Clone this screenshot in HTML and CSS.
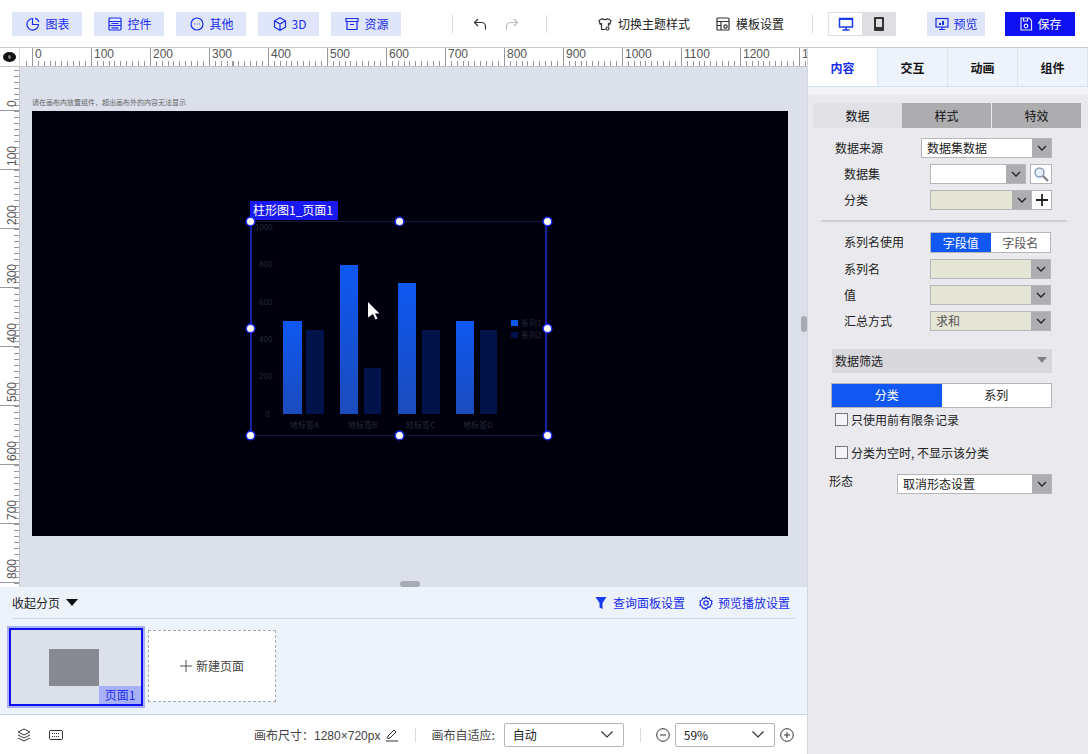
FILE: index.html
```html
<!DOCTYPE html>
<html lang="zh">
<head>
<meta charset="utf-8">
<title>大屏编辑器</title>
<link rel="stylesheet" href="styles.css">
</head>
<body>
<div class="app">
  <header class="topbar">
    <div class="tool-group">
      <button class="tool"><svg class="ic" viewBox="0 0 14 14"><path d="M6.500 1.500A5.800 5.800 0 1 0 12.500 7.500H6.500z"/><path d="M9 1.300a4.500 4.500 0 0 1 3.700 3.700"/></svg>图表</button>
      <button class="tool"><svg class="ic" viewBox="0 0 14 14"><rect x="1" y="1" width="12" height="12" rx="1"/><path d="M1 4.500h12M1 8.500h12M3.500 6.500h7M3.500 10.800h7"/></svg>控件</button>
      <button class="tool"><svg class="ic" viewBox="0 0 14 14"><circle cx="7" cy="7" r="6"/><path d="M4 7h.8M6.600 7h.8M9.200 7h.8"/></svg>其他</button>
      <button class="tool tool-3d"><svg class="ic" viewBox="0 0 14 14"><path d="M7 .8l5.500 3v6.400L7 13.200l-5.500-3V3.800zM1.500 3.800L7 7l5.500-3.200M7 7v6.200"/></svg>3D</button>
      <button class="tool"><svg class="ic" viewBox="0 0 14 14"><path d="M1 1.500h12v3H1zM2 4.500v8h10v-8M5 7.500h4"/></svg>资源</button>
    </div>
    <span class="vline vline-a"></span>
    <svg class="hist" viewBox="0 0 14 14"><path d="M5 2L1.500 5.500 5 9M1.500 5.500h7a4 4 0 0 1 4 4v3"/></svg>
    <svg class="hist hist-off" viewBox="0 0 14 14"><path d="M9 2l3.500 3.500L9 9M12.500 5.500h-7a4 4 0 0 0-4 4v3"/></svg>
    <span class="vline vline-b"></span>
    <span class="link link-theme"><svg class="ic-dark" viewBox="0 0 14 14"><path d="M4.500 1.500L1 3.500l1 3.500 1.500-.5v6h4M9.500 1.500L13 3.500l-1 3.500-1.500-.5v3M4.500 1.500c.5 1.500 4.500 1.500 5 0"/><circle cx="9.500" cy="11.500" r="1.500"/></svg>切换主题样式</span>
    <span class="link link-tpl"><svg class="ic-dark" viewBox="0 0 14 14"><rect x="1" y="1" width="12" height="12" rx="1"/><path d="M1 4.500h12M5 4.500V13M1 8.500h4"/><circle cx="9.500" cy="9.500" r="1.700"/></svg>模板设置</span>
    <span class="vline vline-c"></span>
    <div class="device">
      <span class="device-cell device-on"><svg class="ic-device" viewBox="0 0 16 16"><rect x="1.500" y="2.500" width="13" height="8.500" fill="none" stroke="#1a3cf0" stroke-width="1.500"/><path d="M1.500 3h13" stroke="#1a3cf0" stroke-width="2"/><path d="M4.500 14h7M8 11v3" stroke="#1a3cf0" fill="none" stroke-width="1.500"/></svg></span>
      <span class="device-cell"><svg class="ic-device" viewBox="0 0 16 16"><rect x="3" y="1" width="10" height="14" rx="1" fill="#333"/><rect x="5" y="3" width="6" height="8" fill="#ddd"/></svg></span>
    </div>
    <button class="action action-ghost"><svg class="ic" viewBox="0 0 14 14"><rect x="1" y="1.500" width="12" height="8.500"/><path d="M4 12.500h6M7 10v2.500"/><path class="ic-fill" d="M4 8V6h2v2zM7 8V4h2v4z"/></svg>预览</button>
    <button class="action action-solid"><svg class="ic ic-white" viewBox="0 0 14 14"><path d="M2 1h8l2.500 2.500V13H2z"/><circle cx="7" cy="9" r="1.800"/><path d="M4.500 1v3h4V1"/></svg>保存</button>
  </header>

  <div class="workspace">
    <main class="editor">
      <div class="ruler-top">
        <span class="ruler-corner"><span class="eye"></span></span>
        <div class="ruler-x">
          <span class="rx">0</span><span class="rx">100</span><span class="rx">200</span><span class="rx">300</span><span class="rx">400</span><span class="rx">500</span><span class="rx">600</span><span class="rx">700</span><span class="rx">800</span><span class="rx">900</span><span class="rx">1000</span><span class="rx">1100</span><span class="rx">1200</span><span class="rx">1300</span>
        </div>
      </div>
      <div class="stage-row">
        <div class="ruler-y">
          <span class="ry">0</span><span class="ry">100</span><span class="ry">200</span><span class="ry">300</span><span class="ry">400</span><span class="ry">500</span><span class="ry">600</span><span class="ry">700</span><span class="ry">800</span>
        </div>
        <div class="stage">
          <p class="hint">请在画布内放置组件，超出画布外的内容无法显示</p>
          <div class="canvas">
            <div class="widget">
              <span class="widget-tag">柱形图1_页面1</span>
              <svg class="chart" viewBox="0 0 297 215">
                <defs>
                  <linearGradient id="barA" x1="0" y1="0" x2="0" y2="1"><stop offset="0" stop-color="#0e58f2"/><stop offset="1" stop-color="#1b4cbc"/></linearGradient>
                </defs>
                <g class="axis">
                  <text x="5" y="9">1000</text><text x="9" y="46">800</text><text x="9" y="84">600</text><text x="9" y="121">400</text><text x="9" y="158">200</text><text x="15" y="196">0</text>
                  <text x="40" y="207">地标签A</text><text x="98" y="207">地标签B</text><text x="156" y="207">较标签C</text><text x="213" y="207">地标签D</text>
                  <text x="271" y="105">系列1</text><text x="271" y="117">系列2</text>
                </g>
                <rect x="33" y="100" width="19" height="93" fill="url(#barA)"/><rect x="56" y="109" width="18" height="84" fill="#02134a"/>
                <rect x="90" y="44" width="18" height="149" fill="url(#barA)"/><rect x="114" y="147" width="17" height="46" fill="#02134a"/>
                <rect x="148" y="62" width="18" height="131" fill="url(#barA)"/><rect x="172" y="109" width="18" height="84" fill="#02134a"/>
                <rect x="206" y="100" width="18" height="93" fill="url(#barA)"/><rect x="230" y="109" width="17" height="84" fill="#02134a"/>
                <rect x="261" y="99" width="7" height="6" fill="#0e58f2"/><rect x="261" y="111" width="7" height="6" fill="#02134a"/>
              </svg>
              <i class="handle h-tl"></i><i class="handle h-tc"></i><i class="handle h-tr"></i><i class="handle h-ml"></i><i class="handle h-mr"></i><i class="handle h-bl"></i><i class="handle h-bc"></i><i class="handle h-br"></i>
              <svg class="cursor" viewBox="0 0 12 18"><path d="M0 0l11.500 11.500H7l2.500 5-2 1-2.500-5.500L0 15.500z"/></svg>
            </div>
          </div>
        </div>
        <span class="grip grip-v"></span>
        <span class="grip grip-h"></span>
      </div>

      <section class="pages">
        <div class="pages-head">
          <span class="collapse">收起分页<i class="caret"></i></span>
          <span class="pages-links">
            <span class="page-link"><svg class="ic-sm" viewBox="0 0 14 14"><path d="M1.500 1h11L8.500 7v6l-3-1.500V7z" fill="#1a3cf0"/></svg>查询面板设置</span>
            <span class="page-link"><svg class="ic-sm ic-line" viewBox="0 0 14 14"><path d="M7 .8l1.200 1.700 2-.4.700 2 2 .7-.4 2 .4 1-1.200 1.400-.8 2-2-.2L7 13.200l-1.400-1.200-2 .2-.7-2-1.900-1 .5-2-.5-2 1.900-1 .7-2 2 .4z"/><circle cx="7" cy="7" r="2.200"/></svg>预览播放设置</span>
          </span>
        </div>
        <div class="pages-list">
          <div class="thumb">
            <div class="thumb-art"></div>
            <span class="thumb-name">页面1</span>
          </div>
          <div class="new-page"><svg class="plus-thin" viewBox="0 0 12 12"><path d="M6 0v12M0 6h12"/></svg>新建页面</div>
        </div>
      </section>

      <footer class="statusbar">
        <svg class="st-ic st-layers" viewBox="0 0 14 14"><path d="M7 1l6 3-6 3-6-3zM1 7l6 3 6-3M1 10l6 3 6-3"/></svg>
        <svg class="st-ic st-keys" viewBox="0 0 14 14"><rect x="0.500" y="2.500" width="13" height="9" rx="1"/><path d="M3 5.500h8M3 8.500h8" stroke-dasharray="1 1"/></svg>
        <span class="size-label">画布尺寸：1280×720px</span>
        <svg class="st-ic st-pen" viewBox="0 0 14 14"><path d="M1 13h12M2.500 10.500l.5-2.500 6-6 2 2-6 6z"/></svg>
        <span class="vline vline-d"></span>
        <span class="fit-label">画布自适应:</span>
        <span class="combo combo-fit">自动<svg class="chev-lg" viewBox="0 0 12 7"><path d="M.5 .5L6 6l5.500-5.500"/></svg></span>
        <span class="vline vline-e"></span>
        <svg class="st-ic st-minus" viewBox="0 0 14 14"><circle cx="7" cy="7" r="6.300"/><path d="M4 7h6"/></svg>
        <span class="combo combo-zoom">59%<svg class="chev-lg" viewBox="0 0 12 7"><path d="M.5 .5L6 6l5.500-5.500"/></svg></span>
        <svg class="st-ic st-plus" viewBox="0 0 14 14"><circle cx="7" cy="7" r="6.300"/><path d="M4 7h6M7 4v6"/></svg>
      </footer>
    </main>

    <aside class="panel">
      <nav class="tabs">
        <span class="tab tab-on">内容</span><span class="tab">交互</span><span class="tab">动画</span><span class="tab">组件</span>
      </nav>
      <div class="panel-body">
        <div class="subtabs">
          <span class="subtab subtab-on">数据</span><span class="subtab">样式</span><span class="subtab">特效</span>
        </div>
        <div class="row row-first row-top"><label class="lab">数据来源</label>
          <span class="sel sel-source"><span class="val val-white">数据集数据</span><span class="arr"><svg viewBox="0 0 10 6"><path d="M1 1l4 4 4-4"/></svg></span></span>
        </div>
        <div class="row"><label class="lab">数据集</label>
          <span class="sel sel-set"><span class="val val-white"></span><span class="arr"><svg viewBox="0 0 10 6"><path d="M1 1l4 4 4-4"/></svg></span></span>
          <span class="mini mini-search"><svg viewBox="0 0 16 16"><circle cx="6.500" cy="6.500" r="4.500" fill="#e6eef7" stroke="#8aa0b8" stroke-width="1.500"/><path d="M10 10l5 5" stroke="#7a7a80" stroke-width="2"/></svg></span>
        </div>
        <div class="row"><label class="lab">分类</label>
          <span class="sel sel-cat"><span class="val"></span><span class="arr"><svg viewBox="0 0 10 6"><path d="M1 1l4 4 4-4"/></svg></span></span>
          <span class="mini mini-plus"><svg viewBox="0 0 12 12"><path d="M6 0v12M0 6h12"/></svg></span>
        </div>
        <hr class="sep">
        <div class="row row-seg"><label class="lab">系列名使用</label>
          <span class="seg"><span class="seg-item seg-on">字段值</span><span class="seg-item">字段名</span></span>
        </div>
        <div class="row"><label class="lab">系列名</label>
          <span class="sel sel-wide"><span class="val"></span><span class="arr"><svg viewBox="0 0 10 6"><path d="M1 1l4 4 4-4"/></svg></span></span>
        </div>
        <div class="row"><label class="lab">值</label>
          <span class="sel sel-wide"><span class="val"></span><span class="arr"><svg viewBox="0 0 10 6"><path d="M1 1l4 4 4-4"/></svg></span></span>
        </div>
        <div class="row"><label class="lab">汇总方式</label>
          <span class="sel sel-wide"><span class="val val-muted">求和</span><span class="arr"><svg viewBox="0 0 10 6"><path d="M1 1l4 4 4-4"/></svg></span></span>
        </div>
        <div class="filter-head">数据筛选<i class="caret caret-grey"></i></div>
        <div class="switch"><span class="switch-item switch-on">分类</span><span class="switch-item">系列</span></div>
        <div class="check check-a"><i class="box"></i>只使用前有限条记录</div>
        <div class="check check-b"><i class="box"></i>分类为空时, 不显示该分类</div>
        <div class="row row-form"><label class="lab">形态</label>
          <span class="sel sel-form"><span class="val val-white">取消形态设置</span><span class="arr"><svg viewBox="0 0 10 6"><path d="M1 1l4 4 4-4"/></svg></span></span>
        </div>
      </div>
    </aside>
  </div>
</div>
</body>
</html>
```

FILE: styles.css
```css
* { box-sizing: border-box; }
html, body { margin: 0; padding: 0; }
body { font-family: "Noto Sans CJK SC", "Liberation Sans", sans-serif; font-size: 12px; color: #222; background: #fff; }
button { font: inherit; border: 0; padding: 0; }
.app { width: 1088px; height: 754px; display: flex; flex-direction: column; overflow: hidden; }

/* top bar */
.topbar { height: 48px; flex: none; display: flex; align-items: center; padding: 0 0 0 12px; border-bottom: 1px solid #c9c9d0; background: #fff; }
.tool-group { display: flex; gap: 12px; }
.tool { width: 70px; height: 24px; padding-left: 2px; background: #dfe6fa; color: #1a2cf0; display: flex; align-items: center; justify-content: center; gap: 5px; }
.tool-3d { width: 61px; }
.ic { width: 14px; height: 14px; fill: none; stroke: #1a2cf0; stroke-width: 1.200; flex: none; }
.ic-fill { fill: #1a2cf0; stroke: none; }
.ic-white { stroke: #dfe6fa; }
.ic-dark { width: 14px; height: 14px; fill: none; stroke: #333; stroke-width: 1.200; flex: none; }
.vline { width: 1px; height: 18px; background: #dcdce0; flex: none; }
.vline-a { margin-left: 51px; }
.hist { width: 14px; height: 14px; fill: none; stroke: #333; stroke-width: 1.200; flex: none; margin-left: 20px; }
.hist-off { stroke: #bbb; margin-left: 18px; }
.vline-b { margin-left: 27px; }
.link { display: flex; align-items: center; gap: 6px; color: #222; flex: none; }
.link-theme { margin-left: 51px; }
.link-tpl { margin-left: 26px; }
.vline-c { margin-left: 28px; }
.device { margin-left: 15px; width: 68px; height: 24px; background: #dedee3; display: flex; padding: 1px; }
.device-cell { width: 33px; display: flex; align-items: center; justify-content: center; }
.device-on { background: #fff; }
.ic-device { width: 16px; height: 16px; }
.action { height: 24px; display: flex; align-items: center; justify-content: center; gap: 5px; flex: none; }
.action-ghost { width: 58px; margin-left: 31px; background: #dfe6fa; color: #1a2cf0; }
.action-solid { width: 70px; margin-left: 20px; background: #1010f5; color: #fff; }

.workspace { flex: 1; display: flex; min-height: 0; }
.editor { width: 808px; flex: none; display: flex; flex-direction: column; border-right: 1px solid #d5d5da; }

/* rulers */
.ruler-top { height: 19px; flex: none; display: flex; background: #fff; }
.ruler-corner { width: 20px; flex: none; display: flex; align-items: center; justify-content: center; border-right: 1px solid #ddd; border-bottom: 1px solid #c4c4ca; }
.eye { width: 13px; height: 10px; border-radius: 50%; background: radial-gradient(circle, #777 0 1.500px, #111 2px); }
.ruler-x { flex: 1; min-width: 0; overflow: hidden; display: flex; padding-left: 12px; border-bottom: 1px solid #c4c4ca;
  background: repeating-linear-gradient(90deg, #999 0 1px, transparent 1px 5.900px) 6px 13px / 100% 6px no-repeat; }
.rx { width: 59px; flex: none; height: 18px; border-left: 1px solid #999; padding-left: 2px; font: 12px/13px "Liberation Sans", sans-serif; color: #555; }
.stage-row { flex: 1; min-height: 0; display: flex; position: relative; }
.ruler-y { width: 20px; flex: none; overflow: hidden; border-right: 1px solid #c4c4ca; display: flex; flex-direction: column;
  background: #fff repeating-linear-gradient(180deg, #999 0 1px, transparent 1px 5.900px) 14px 3px / 6px 100% no-repeat; }
.ry { height: 59px; flex: none; border-top: 1px solid #999; writing-mode: vertical-rl; transform: rotate(180deg); font: 12px/13px "Liberation Sans", sans-serif; color: #555; padding-top: 3px; padding-right: 6px; }
.ry:first-child { margin-top: -15px; }

/* stage */
.stage { flex: 1; min-width: 0; background: #dce0eb; padding: 28px 0 0 12px; }
.hint { margin: 0 0 2px; height: 14px; font-size: 7px; line-height: 14px; color: #666; }
.canvas { width: 756px; height: 425px; background: #00000c; position: relative; }
.widget { position: absolute; left: 218px; top: 110px; width: 297px; height: 215px; border: 1px solid #15193f; border-left: 2px solid #1522a8; border-right: 2px solid #1522a8; }
.widget-tag { position: absolute; left: -2px; top: -21px; width: 88px; height: 19px; background: #1a1af0; color: #fff; font-size: 12px; line-height: 18px; padding-left: 3px; white-space: nowrap; }
.chart { position: absolute; left: -2px; top: -1px; width: 297px; height: 215px; }
.axis text { font-size: 8px; fill: #272b3c; font-family: "Noto Sans CJK SC", "Liberation Sans", sans-serif; }
.handle { position: absolute; width: 7px; height: 7px; border-radius: 50%; background: #fff; box-shadow: 0 0 0 1.500px #1a2cf0; }
.h-tl { left: -5px; top: -4px; } .h-tc { left: 144px; top: -4px; } .h-tr { right: -6px; top: -4px; }
.h-ml { left: -5px; top: 103px; } .h-mr { right: -6px; top: 103px; }
.h-bl { left: -5px; bottom: -4px; } .h-bc { left: 144px; bottom: -4px; } .h-br { right: -6px; bottom: -4px; }
.cursor { position: absolute; left: 116px; top: 80px; width: 12px; height: 18px; fill: #fff; }
.grip { position: absolute; background: #a9abb2; border-radius: 3px; }
.grip-v { right: 0; top: 249px; width: 6px; height: 16px; }
.grip-h { left: 400px; bottom: 0; width: 20px; height: 6px; }

/* pages */
.pages { height: 128px; flex: none; background: #edf3fb; padding: 0 12px 0 8px; border-bottom: 1px solid #cfd2d8; }
.pages-head { height: 32px; margin-left: 4px; display: flex; align-items: center; justify-content: space-between; border-bottom: 1px solid #d4d8e0; padding-right: 5px; }
.collapse { display: flex; align-items: center; color: #222; }
.caret { display: block; width: 0; height: 0; border-left: 6px solid transparent; border-right: 6px solid transparent; border-top: 7px solid #111; margin-left: 6px; }
.caret-grey { border-top-color: #808088; border-left-width: 5px; border-right-width: 5px; border-top-width: 6px; }
.pages-links { display: flex; gap: 14px; color: #1a2cf0; }
.page-link { display: flex; align-items: center; gap: 5px; }
.ic-sm { width: 14px; height: 14px; }
.ic-line { fill: none; stroke: #1a2cf0; stroke-width: 1.200; }
.pages-list { display: flex; gap: 4px; align-items: center; height: 88px; padding-top: 5px; }
.thumb { width: 136px; height: 80px; border: 3px solid #1010f5; outline: 2px solid #a8b0f8; outline-offset: -1px; background: #dce0eb; position: relative; margin-top: 2px; }
.thumb-art { position: absolute; left: 38px; top: 19px; width: 50px; height: 37px; background: #888890; }
.thumb-name { position: absolute; right: 0; bottom: 0; width: 42px; height: 18px; background: #a8b0f8; color: #1a2cf0; font-size: 12px; line-height: 18px; text-align: center; }
.new-page { width: 128px; height: 72px; border: 1px dashed #aaa; background: #fff; display: flex; align-items: center; justify-content: center; gap: 4px; color: #444; }
.plus-thin { width: 12px; height: 12px; fill: none; stroke: #555; stroke-width: 1; }

/* status bar */
.statusbar { height: 39px; flex: none; background: #fff; display: flex; align-items: center; padding-left: 17px; color: #444; }
.st-ic { width: 14px; height: 14px; fill: none; stroke: #333; stroke-width: 1; flex: none; }
.st-keys { margin-left: 18px; }
.size-label { margin-left: 191px; white-space: nowrap; font-family: "Liberation Sans", "Noto Sans CJK SC", sans-serif; }
.st-pen { margin-left: 5px; }
.vline-d { margin-left: 16px; height: 14px; }
.fit-label { margin-left: 15px; white-space: nowrap; }
.combo { height: 24px; border: 1px solid #b4b4b8; border-radius: 2px; display: flex; align-items: center; justify-content: space-between; padding: 0 10px 0 8px; color: #222; background: #fff; flex: none; }
.combo-fit { width: 120px; margin-left: 9px; }
.combo-zoom { width: 100px; margin-left: 5px; }
.chev-lg { width: 12px; height: 7px; fill: none; stroke: #333; stroke-width: 1.200; }
.vline-e { margin-left: 16px; height: 14px; }
.st-minus { margin-left: 15px; }
.st-plus { margin-left: 5px; }

/* right panel */
.panel { flex: 1; min-width: 0; display: flex; flex-direction: column; background: #e9e9ee; }
.tabs { height: 39px; flex: none; display: flex; background: #edf3fb; border-bottom: 1px solid #cfe0f5; }
.tab { width: 70px; display: flex; align-items: center; justify-content: center; color: #111; font-weight: 700; border-right: 1px solid #e0e4ea; }
.tab-on { background: #fff; color: #1a2cf0; }
.panel-body { flex: 1; padding-top: 9px; border-top: 7px solid #f3f4f7; position: relative; }
.subtabs { display: flex; margin-left: 5px; width: 268px; height: 25px; gap: 1px; }
.subtab { flex: 1; background: #adadb0; display: flex; align-items: center; justify-content: center; color: #111; }
.subtab-on { background: #e2e2e6; margin-right: -1px; }
.row { display: flex; height: 20px; margin-top: 6px; padding-left: 36px; align-items: center; }
.row-first { margin-top: 10px; }
.lab { width: 86px; flex: none; color: #222; padding-bottom: 2px; }
.row-top { padding-left: 27px; }
.sel { display: flex; height: 20px; border: 1px solid #b5b5ba; flex: none; background: #fff; }
.val { flex: 1; min-width: 0; background: #e4e5d4; line-height: 18px; padding-left: 5px; color: #222; white-space: nowrap; }
.val-white { background: #fff; }
.val-muted { color: #555; }
.arr { width: 19px; flex: none; background: #aeaeb2; display: flex; align-items: center; justify-content: center; }
.arr svg { width: 10px; height: 6px; fill: none; stroke: #222; stroke-width: 1.300; }
.sel-source { width: 131px; }
.sel-set { width: 96px; }
.sel-cat { width: 102px; }
.sel-wide { width: 121px; }
.sel-form { width: 155px; }
.mini { height: 20px; display: flex; align-items: center; justify-content: center; background: #fff; flex: none; }
.mini-search { width: 22px; margin-left: 4px; border: 1px solid #b5b5ba; }
.mini-search svg { width: 16px; height: 16px; }
.mini-plus { width: 20px; border: 1px solid #b5b5ba; border-left: 0; }
.mini-plus svg { width: 12px; height: 12px; fill: none; stroke: #222; stroke-width: 1.800; }
.sep { margin: 10px 0 0 13px; width: 246px; height: 2px; border: 0; background: #cfcfd4; }
.row-seg { margin-top: 10px; height: 21px; }
.seg { width: 121px; height: 21px; border: 1px solid #b5b5ba; display: flex; background: #fff; }
.seg-item { flex: 1; text-align: center; line-height: 19px; color: #555; }
.seg-on { background: #1158f2; color: #fff; }
.filter-head { margin: 18px 0 0 24px; width: 220px; height: 24px; background: #d8d8dc; display: flex; align-items: center; justify-content: space-between; padding: 0 5px 2px 3px; color: #222; }
.switch { margin: 10px 0 0 23px; width: 221px; height: 25px; border: 1px solid #b5b5ba; display: flex; background: #fff; }
.switch-item { flex: 1; text-align: center; line-height: 22px; color: #222; }
.switch-on { background: #1158f2; color: #fff; }
.check { display: flex; align-items: center; gap: 3px; margin-left: 27px; height: 15px; color: #222; white-space: nowrap; }
.check-a { margin-top: 4px; }
.check-b { margin-top: 18px; }
.box { width: 13px; height: 13px; border: 1px solid #77777c; background: #f4f4f6; flex: none; }
.row-form { margin-top: 14px; padding-left: 21px; }
.row-form .lab { width: 68px; margin-top: -5px; }
```
